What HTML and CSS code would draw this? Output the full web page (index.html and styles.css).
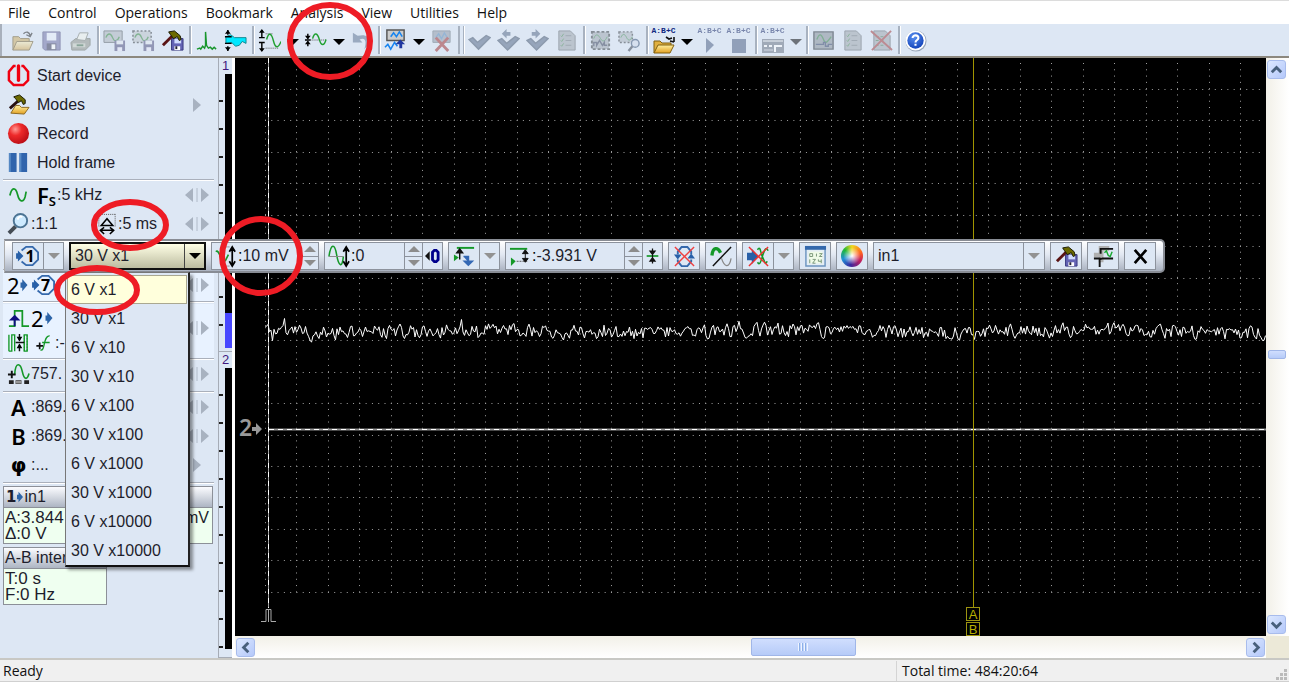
FILE: index.html
```html
<!DOCTYPE html>
<html lang="en">
<head>
<meta charset="utf-8">
<title>Oscilloscope</title>
<link rel="stylesheet" href="styles.css">
</head>
<body>
<svg class="sprites" aria-hidden="true">
  <defs>
    <linearGradient id="gold" x1="0" y1="0" x2="0" y2="1"><stop offset="0" stop-color="#fff0a0"/><stop offset="1" stop-color="#e2a020"/></linearGradient>
    <radialGradient id="ball" cx=".35" cy=".3" r=".75"><stop offset="0" stop-color="#ff9a94"/><stop offset=".4" stop-color="#ee2a2a"/><stop offset="1" stop-color="#b80c14"/></radialGradient>
    <radialGradient id="helpball" cx=".4" cy=".3" r=".8"><stop offset="0" stop-color="#5a90f0"/><stop offset="1" stop-color="#0c3cb4"/></radialGradient>
    <symbol id="folder" viewBox="0 0 24 24">
      <path d="M2 22V8h6l2 2h9v4" fill="#d8a838" stroke="#6e5410"/>
      <path d="M2 22l4-9h17l-4 9z" fill="url(#gold)" stroke="#6e5410"/>
      <path d="M13 5c3-3 6-2 7 2m2-3l-2 4-4-2" fill="none" stroke="#222" stroke-width="1.4"/>
    </symbol>
    <symbol id="folder-wide" viewBox="0 0 24 19">
      <path d="M2 18V6h6l2 2h9v3" fill="#e0b040" stroke="#806010"/>
      <path d="M2 18l4-8h16l-4 8z" fill="url(#gold)" stroke="#806010"/>
      <path d="M14 2l3 2 3-1m2 4V2m-4 4l4 1" fill="none" stroke="#111" stroke-width="1.6"/>
    </symbol>
    <symbol id="disk" viewBox="0 0 24 24">
      <path d="M3 3h18v19H5l-2-2z" fill="#6868b8" stroke="#45458c"/>
      <path d="M7 4h10v8H7z" fill="#e8f0ff"/><path d="M7 15h10v7H7z" fill="#30305c"/><path d="M12 16h4v5h-4z" fill="#fff"/>
    </symbol>
    <symbol id="printer" viewBox="0 0 24 24">
      <path d="M2 14l5-4h15v7l-5 5H3z" fill="#8a9080" stroke="#606858"/>
      <path d="M8 11l3-7h9l-3 8z" fill="#f2f6e8" stroke="#707868"/><path d="M4 15h13v4H4z" fill="#c4ccb4"/><path d="M8 17h7" stroke="#286838" stroke-width="2"/>
    </symbol>
    <symbol id="screen-save" viewBox="0 0 24 24">
      <path d="M1 2h19v12H1z" fill="#a8b4bc" stroke="#48545c"/><path d="M3 9c2-5 5-5 7 0s5 4 7-1" fill="none" stroke="#108c20" stroke-width="1.4"/>
      <path d="M12 12h11v11H12z" fill="#48488c"/><path d="M14 12h7v4h-7z" fill="#e0e8f4"/><path d="M15 19h5v4h-5z" fill="#e8e8ff"/>
    </symbol>
    <symbol id="region-save" viewBox="0 0 24 24">
      <path d="M1 2h19v12H1z" fill="#b8c2ca" stroke="#303840" stroke-width="1.6" stroke-dasharray="2 2"/><path d="M3 9c2-5 5-5 7 0s5 4 7-1" fill="none" stroke="#108c20" stroke-width="1.4"/>
      <path d="M12 12h11v11H12z" fill="#48488c"/><path d="M14 12h7v4h-7z" fill="#e0e8f4"/><path d="M15 19h5v4h-5z" fill="#e8e8ff"/>
    </symbol>
    <symbol id="hammer-save" viewBox="0 0 24 24">
      <path d="M11 10h12v12H11z" fill="#6464b4" stroke="#383880"/><path d="M14 10h7v5h-7z" fill="#d0dcff"/><path d="M14 18h6v4h-6z" fill="#fff"/><path d="M15 18h2v3h-2z" fill="#223"/>
      <path d="M2 17L13 6" stroke="#5a1414" stroke-width="3"/><path d="M8 3l6-1 6 5 1 4-2 1-2-4-4 2-3-4z" fill="#6c6a00" stroke="#181800"/>
    </symbol>
    <symbol id="modes" viewBox="0 0 24 24">
      <path d="M4 21l5-8h4l2 2h8l-5 7z" fill="url(#gold)" stroke="#8c6820"/>
      <path d="M3 16L13 7" stroke="#281010" stroke-width="3"/><path d="M7 4l6-2 6 5v4l-2 1-2-4-3 2-3-4z" fill="#6c6a00" stroke="#181800"/>
    </symbol>
    <symbol id="spectrum" viewBox="0 0 24 24"><path d="M2 21l3-1 1 1 2-3 2 2 1-3V3l1 14 2 3 2-1 2 2 2-2 2 2" fill="none" stroke="#18962c" stroke-width="1.5"/></symbol>
    <symbol id="envelope" viewBox="0 0 24 24">
      <path d="M2 8l5-2 4 3h12v6l-4-2-3 4-4 1-4-4-6 1z" fill="#00e8ff" stroke="#108890"/>
      <path d="M4 1v5M4 23v-5M1 8h7M1 15h7" stroke="#000" stroke-width="1.5"/><path d="M1 5l3-4 3 4zM1 19l3 4 3-4z"/>
    </symbol>
    <symbol id="sine-fit" viewBox="0 0 24 24">
      <path d="M4 1v8M4 14v9M1 9h6M1 14h6" stroke="#000" stroke-width="1.500"/><path d="M1 4l3-4 3 4zM1 20l3 4 3-4z"/>
      <path d="M8 5h7M8 20h14" stroke="#555" stroke-dasharray="1 1"/><path d="M9 11c2-8 5-7 7 1s5 9 8 1" fill="none" stroke="#20a030" stroke-width="1.500"/>
    </symbol>
    <symbol id="sine-center" viewBox="0 0 24 24">
      <path d="M4 5v5M4 13v5M1 11.500h6" stroke="#000" stroke-width="1.500"/><path d="M1 7l3 4 3-4zM1 16l3-4 3 4z"/><path d="M8 11.500h15" stroke="#555" stroke-dasharray="1 1"/>
      <path d="M9 10c2-7 5-6 7 1s5 7 7 0" fill="none" stroke="#20a030" stroke-width="1.500"/>
    </symbol>
    <symbol id="undo" viewBox="0 0 24 24"><path d="M3 4v10h10l-3-3c5-2 8 0 5 10 8-8 6-17-7-14z" fill="#50709c"/></symbol>
    <symbol id="wave-add" viewBox="0 0 24 24">
      <path d="M3 1h18v11H3z" fill="#ccc" stroke="#555" stroke-width="1.500"/><path d="M7 8l3-4 3 4 3-5 3 5M1 19l3-3 3 5 4-7 3 4" fill="none" stroke="#1684f0" stroke-width="1.600"/><path d="M17 11l5 5h-3v4h-3v-4h-4z" fill="#2038a0"/>
    </symbol>
    <symbol id="wave-del" viewBox="0 0 24 24">
      <path d="M3 2h18v12H3z" fill="#8898ac" stroke="#607080"/><path d="M6 9l3-4 3 5 3-6 3 5" fill="none" stroke="#3c88d0" stroke-width="1.4"/><path d="M6 9l13 14M19 9L6 23" stroke="#c42020" stroke-width="3"/>
    </symbol>
    <symbol id="check" viewBox="0 0 24 24"><path d="M1 11l4-2 5 5 9-7 4 2-12 12z" fill="#4a6690" stroke="#365074" stroke-width="1.500"/></symbol>
    <symbol id="check-prev" viewBox="0 0 24 24"><path d="M1 12l4-2 5 5 9-7 4 2-12 12z" fill="#4a6690" stroke="#365074" stroke-width="1.500"/><path d="M5 5l5-5v3h4v4h-4v3z" fill="#4a6690"/></symbol>
    <symbol id="check-next" viewBox="0 0 24 24"><path d="M1 12l4-2 5 5 9-7 4 2-12 12z" fill="#4a6690" stroke="#365074" stroke-width="1.500"/><path d="M15 5l-5-5v3H6v4h4v3z" fill="#4a6690"/></symbol>
    <symbol id="sheet" viewBox="0 0 24 24">
      <path d="M4 2h12l5 5v15H4z" fill="#98a2ac" stroke="#58626c"/><path d="M6 7l1 1 2-3M6 12l1 1 2-3M6 17l1 1 2-3" fill="none" stroke="#248c34"/><path d="M11 7h6M11 12h6M11 17h6" stroke="#607078"/>
    </symbol>
    <symbol id="sheet-del" viewBox="0 0 24 24">
      <path d="M4 2h12l5 5v15H4z" fill="#98a2ac" stroke="#58626c"/><path d="M6 8h10M6 12h10M6 17h10" stroke="#287838" stroke-dasharray="3 2"/><path d="M1 2l22 20M22 2L2 22" stroke="#c02828" stroke-width="2"/>
    </symbol>
    <symbol id="chart-frame" viewBox="0 0 24 24">
      <path d="M3 3h18v18H3z" fill="#98a4b0" stroke="#303840" stroke-width="2" stroke-dasharray="3 2"/><path d="M5 10c2-6 5-4 7 0s5 3 7-2" fill="none" stroke="#188c34"/><path d="M5 18v-4h3v3l3-5 3 5 2-3v3h3" fill="none" stroke="#303c60" stroke-width="1.5"/>
    </symbol>
    <symbol id="chart-zoom" viewBox="0 0 24 24">
      <path d="M1 3h14v11H1z" fill="#a8b4c0" stroke="#303840" stroke-width="1.5" stroke-dasharray="2 2"/><path d="M3 9c2-5 4-4 6 0s4 3 6-1" fill="none" stroke="#188c34"/><circle cx="18" cy="15" r="4" fill="#ccdcf4" stroke="#284c80" stroke-width="1.5"/><path d="M15 18l-4 5" stroke="#303c50" stroke-width="2.500"/>
    </symbol>
    <symbol id="play" viewBox="0 0 24 19"><path d="M8 3l8 7-8 8z" fill="#405c90"/></symbol>
    <symbol id="stop" viewBox="0 0 24 19"><path d="M5 4h14v14H5z" fill="#405c90"/></symbol>
    <symbol id="panel" viewBox="0 0 24 19"><path d="M1 4h22v14H1z" fill="#607084"/><path d="M2 6h20" stroke="#fff"/><path d="M3 11h3m2 0h3m3 6v-6h7" stroke="#fff" stroke-width="2" fill="none"/><path d="M3 15h9" stroke="#ccd"/></symbol>
    <symbol id="scope" viewBox="0 0 24 24"><path d="M2 3h20v18H2z" fill="#7c8c98" stroke="#202c38" stroke-width="1.5"/><path d="M5 11c3-8 5-5 7 0s4 3 8-3" fill="none" stroke="#108028" stroke-width="1.4"/><path d="M4 16h8v-2h2v4h3v-2h4" fill="none" stroke="#203870" stroke-width="1.4"/></symbol>
    <symbol id="help" viewBox="0 0 24 24"><circle cx="12.500" cy="12.500" r="11" fill="#687890" opacity=".6"/><circle cx="12" cy="12" r="10.500" fill="#fff"/><circle cx="12" cy="12" r="8.500" fill="url(#helpball)"/><path d="M9 9.500C9 5.500 15.500 6 15 9.500c0 2-3 2-3 4.500m0 1.500v2" fill="none" stroke="#fff" stroke-width="2.200"/></symbol>
    <symbol id="power" viewBox="0 0 24 24"><path d="M9 2H7L2 8v9l5 5h10l5-5V8l-5-6h-2" fill="none" stroke="#f00010" stroke-width="2.600"/><path d="M12 2v15" stroke="#f00010" stroke-width="3.500" stroke-linecap="round"/></symbol>
    <symbol id="record" viewBox="0 0 24 24"><circle cx="12" cy="12" r="11" fill="url(#ball)"/></symbol>
    <symbol id="pause" viewBox="0 0 24 24"><path d="M2 2h8v20H2zM13 2h8v20h-8z" fill="#3064ac"/><path d="M2 2h2v20H2zM13 2h2v20h-2z" fill="#5488c4"/></symbol>
    <symbol id="sine" viewBox="0 0 24 24"><path d="M3 13c2-9 6-9 8-1s6 9 8 2l1-5" fill="none" stroke="#149828" stroke-width="1.800"/></symbol>
    <symbol id="magnifier" viewBox="0 0 24 24"><path d="M9 15l-7 7" stroke="#444c54" stroke-width="4"/><circle cx="14" cy="9" r="7" fill="#cdeaff" stroke="#4c7494" stroke-width="2"/><path d="M11 8c1-3 3-4 5-3" stroke="#fff" stroke-width="2" fill="none"/></symbol>
    <symbol id="width" viewBox="0 0 20 24"><path d="M1.500 2v13M18.500 2v13M1 2.500h17" fill="none" stroke="#555" stroke-dasharray="1 1"/><path d="M4 14l6-7 6 7zM3 19h14M7 16l-4 3 4 4M13 16l4 3-4 4" fill="none" stroke="#000" stroke-width="1.600"/></symbol>
    <symbol id="blue-dot-arrow" viewBox="0 0 8 16"><path d="M0 5h2V1l6 7-6 7v-4H0z" fill="#2c64a8"/></symbol>
    <symbol id="circle" viewBox="0 0 26 24"><path d="M0 9h2V6l6 6-6 6v-3H0z" fill="#2860a8"/><path d="M6 6l5-4h7l6 6v8l-6 6h-7l-5-4" fill="none" stroke="#3468ac" stroke-width="2"/></symbol>
    <symbol id="rise" viewBox="0 0 24 24"><path d="M2 20h6V4h8v16h7" fill="none" stroke="#149828" stroke-width="1.800"/><path d="M8 8l6 6H2z" fill="#101080"/><path d="M8 12v8" stroke="#101080" stroke-width="2"/></symbol>
    <symbol id="gate" viewBox="0 0 24 24"><path d="M2 21h3V4h3v17M2 4v17M18 4h3v17h-3z" fill="none" stroke="#149828" stroke-width="1.400"/><path d="M18 4v17M21 4v17" stroke="#149828" stroke-dasharray="2 1"/><path d="M9 12h9M13 3v7M13 14v7" stroke="#111" stroke-width="1.500"/><path d="M10 6h6l-3 5zM10 18h6l-3-5z"/></symbol>
    <symbol id="slope" viewBox="0 0 24 24"><path d="M9 21c6 2 3-18 11-17M11 12h9" fill="none" stroke="#149828" stroke-width="1.600"/><path d="M4 16h8M8 12v8" stroke="#111" stroke-width="2"/></symbol>
    <symbol id="delay" viewBox="0 0 24 24"><path d="M8 13c1-14 6-12 8-3s5 9 7 2" fill="none" stroke="#149828" stroke-width="1.700"/><path d="M5 9v8M1 13h8" stroke="#111" stroke-width="2"/><path d="M2 21h5M9 21h6M18 21h5" stroke="#222" stroke-width="4"/><path d="M9 21h6" stroke="#999" stroke-width="3"/></symbol>
    <symbol id="gain" viewBox="0 0 24 24"><path d="M1 7c3-4 6 13 10 9l3-6" fill="none" stroke="#149828" stroke-width="1.700"/><path d="M8 2h8M8 22h8" stroke="#555" stroke-dasharray="1 1"/><path d="M18 3v18M15 7l3-5 3 5M15 17l3 5 3-5" fill="none" stroke="#000" stroke-width="1.800"/></symbol>
    <symbol id="offset" viewBox="0 0 24 24"><path d="M1 12C3-2 7-2 9 10s6 15 7 2" fill="none" stroke="#149828" stroke-width="1.600"/><path d="M1 12h15" stroke="#888"/><path d="M19 3v18M16 7l3-5 3 5M16 17l3 5 3-5" fill="none" stroke="#000" stroke-width="1.800"/></symbol>
    <symbol id="zero" viewBox="0 0 16 20"><path d="M5 5v10L0 10z" fill="#111"/><path d="M8 6l2-2h2l2 2v8l-2 2h-2l-2-2z" fill="none" stroke="#00008c" stroke-width="3"/></symbol>
    <symbol id="trigger" viewBox="0 0 24 24"><path d="M4 3h18" stroke="#149828" stroke-width="2"/><path d="M1 10l5 3-5 4z" fill="#149828"/><path d="M7 5v10M4 8l3-4 3 4z" stroke="#111" fill="#111" stroke-width="1.500"/><path d="M11 12h5v6M12 17h8l-4 4z" stroke="#3468b4" stroke-width="1.800" fill="#3468b4"/></symbol>
    <symbol id="level" viewBox="0 0 24 24"><path d="M1 4h18" stroke="#149828" stroke-width="2"/><path d="M2 13l5 4-5 5z" fill="#149828"/><path d="M8 17h12" stroke="#555" stroke-dasharray="2 1"/><path d="M17 6v10M14 9l3-4 3 4zM14 14l3 4 3-4z" fill="#111" stroke="#111"/></symbol>
    <symbol id="center" viewBox="0 0 16 24"><path d="M1 12h14" stroke="#149828" stroke-width="2"/><path d="M8 3v18M5 6h6l-3 4zM5 18h6l-3-4z" fill="#111" stroke="#111" stroke-width="1.500"/></symbol>
    <symbol id="loop-off" viewBox="0 0 24 24"><path d="M5 10V7l4-5h6l4 5v3M5 15v2l4 5h6l4-5v-2" fill="none" stroke="#3468ac" stroke-width="2"/><path d="M1 10h8l-4 5zM15 14h8l-4-5z" fill="#2860a8"/><path d="M2 2l20 20M22 2L2 22" stroke="#f04040" stroke-width="1.500"/></symbol>
    <symbol id="invert" viewBox="0 0 24 24"><path d="M2 11c1-9 6-9 9-3" fill="none" stroke="#149828" stroke-width="3.500"/><path d="M12 14c3 9 8 11 10 0" fill="none" stroke="#888" stroke-width="1.300"/><path d="M3 22L22 2" stroke="#111" stroke-width="1.500"/></symbol>
    <symbol id="filter-off" viewBox="0 0 24 24"><path d="M0 8h5V4l7 8-7 8v-4H0z" fill="#2860a8"/><path d="M11 5c3-5 3 3 5 7s3 10 5 5M11 18c3 5 4-4 6-9s3-7 5-3" fill="none" stroke="#149828" stroke-width="1.600"/><path d="M2 2l20 20M22 2L2 22" stroke="#f03030" stroke-width="1.500"/></symbol>
    <symbol id="readout" viewBox="0 0 24 24"><path d="M2 2h20v20H2z" fill="#e4eef4" stroke="#6c94c0" stroke-width="1.500"/><path d="M1 3h22" stroke="#3468ac" stroke-width="4"/><path d="M5 7h14v12H5z" fill="#effbe8"/><path d="M6 9h3v3H6zM13 9v3M16 9h3l-3 3h3M6 15v4M9 15h3l-3 4h3M15 15v2h3m0-2v4" fill="none" stroke="#779478"/></symbol>
    <symbol id="hook" viewBox="0 0 24 24"><path d="M7 1h11v5H12v12H7v-5H2V8h5z" fill="#b0b0b0"/><path d="M9 9V4h13M2 14h7M8 23v-8l3-1h11" fill="none" stroke="#111" stroke-width="2"/><path d="M13 8l2-2 2 5 2 1 2-5" fill="none" stroke="#18a830" stroke-width="1.500"/></symbol>
    <symbol id="close" viewBox="0 0 24 24"><path d="M6 5l12 14M18 5L6 19" stroke="#000" stroke-width="2.800"/></symbol>
    <symbol id="nudge" viewBox="0 0 24 14"><path d="M8 0v14L0 7zM16 0v14l8-7z" fill="#a8b2c0"/><path d="M12 0v14" stroke="#b0bac8"/></symbol>
    <symbol id="next" viewBox="0 0 24 14"><path d="M8 0v14l8-7z" fill="#a8b2c0"/></symbol>
  </defs>
</svg>

<nav class="menu">
  <button>File</button><button>Control</button><button>Operations</button><button>Bookmark</button><button>Analysis</button><button>View</button><button>Utilities</button><button>Help</button>
</nav>

<div class="toolbar" role="toolbar" aria-label="Main">
  <button class="tool off" aria-label="Open"><svg><use href="#folder"/></svg></button>
  <button class="tool off" aria-label="Save"><svg><use href="#disk"/></svg></button>
  <button class="tool off" aria-label="Print"><svg><use href="#printer"/></svg></button>
  <i class="sep"></i>
  <button class="tool off" aria-label="Save screen"><svg><use href="#screen-save"/></svg></button>
  <button class="tool off" aria-label="Save region"><svg><use href="#region-save"/></svg></button>
  <button class="tool" aria-label="Save settings"><svg><use href="#hammer-save"/></svg></button>
  <i class="sep"></i>
  <button class="tool" aria-label="Spectrum"><svg><use href="#spectrum"/></svg></button>
  <button class="tool" aria-label="Envelope"><svg><use href="#envelope"/></svg></button>
  <i class="sep"></i>
  <button class="tool" aria-label="Fit"><svg><use href="#sine-fit"/></svg></button>
  <button class="drop" aria-label="Fit options"></button>
  <button class="tool" aria-label="Center"><svg><use href="#sine-center"/></svg></button>
  <button class="drop" aria-label="Center options"></button>
  <button class="tool off" aria-label="Undo"><svg><use href="#undo"/></svg></button>
  <i class="sep"></i>
  <button class="tool" aria-label="Add wave"><svg><use href="#wave-add"/></svg></button>
  <button class="drop" aria-label="Wave options"></button>
  <button class="tool off" aria-label="Remove wave"><svg><use href="#wave-del"/></svg></button>
  <i class="sep wide"></i>
  <button class="tool off" aria-label="Apply"><svg><use href="#check"/></svg></button>
  <button class="tool off" aria-label="Previous"><svg><use href="#check-prev"/></svg></button>
  <button class="tool off" aria-label="Next"><svg><use href="#check-next"/></svg></button>
  <button class="tool off" aria-label="List"><svg><use href="#sheet"/></svg></button>
  <i class="sep"></i>
  <button class="tool off" aria-label="Chart"><svg><use href="#chart-frame"/></svg></button>
  <button class="tool off" aria-label="Zoom chart"><svg><use href="#chart-zoom"/></svg></button>
  <i class="sep"></i>
  <button class="tool formula"><span>A:B+C</span><svg><use href="#folder-wide"/></svg></button>
  <button class="drop" aria-label="Script options"></button>
  <button class="tool formula off"><span>A:B+C</span><svg><use href="#play"/></svg></button>
  <button class="tool formula off"><span>A:B+C</span><svg><use href="#stop"/></svg></button>
  <i class="sep"></i>
  <button class="tool formula off"><span>A:B+C</span><svg><use href="#panel"/></svg></button>
  <button class="drop off" aria-label="Panel options"></button>
  <i class="sep"></i>
  <button class="tool off" aria-label="Scope"><svg><use href="#scope"/></svg></button>
  <button class="tool off" aria-label="Report"><svg><use href="#sheet"/></svg></button>
  <button class="tool off" aria-label="Clear report"><svg><use href="#sheet-del"/></svg></button>
  <i class="sep"></i>
  <button class="tool" aria-label="About"><svg><use href="#help"/></svg></button>
</div>

<main class="work">
  <aside class="side">
    <section class="group commands">
      <button class="row"><svg class="ico"><use href="#power"/></svg><span>Start device</span></button>
      <button class="row"><svg class="ico"><use href="#modes"/></svg><span>Modes</span><svg class="nudge"><use href="#next"/></svg></button>
      <button class="row"><svg class="ico"><use href="#record"/></svg><span>Record</span></button>
      <button class="row"><svg class="ico"><use href="#pause"/></svg><span>Hold frame</span></button>
    </section>
    <section class="group scale">
      <div class="row"><svg class="ico"><use href="#sine"/></svg><b class="big">F<sub>S</sub></b><span>:5 kHz</span><svg class="nudge"><use href="#nudge"/></svg></div>
      <div class="row tight"><svg class="ico"><use href="#magnifier"/></svg><span class="zoom">:1:1</span><svg class="ico slim"><use href="#width"/></svg><span>:5 ms</span><svg class="nudge"><use href="#nudge"/></svg></div>
    </section>
    <section class="group channel">
      <div class="row"><span class="big">2</span><svg class="pin"><use href="#blue-dot-arrow"/></svg><span class="chan"><svg><use href="#circle"/></svg><b>7</b></span><svg class="nudge"><use href="#nudge"/></svg></div>
    </section>
    <section class="group sync">
      <div class="row short"><svg class="ico"><use href="#rise"/></svg><span class="big">2</span><svg class="pin"><use href="#blue-dot-arrow"/></svg></div>
      <div class="row short"><svg class="ico"><use href="#gate"/></svg><svg class="ico slope"><use href="#slope"/></svg><span>:-2</span></div>
      <svg class="nudge mid"><use href="#nudge"/></svg>
    </section>
    <section class="group delay">
      <div class="row tight"><svg class="ico"><use href="#delay"/></svg><span>757.</span><svg class="nudge"><use href="#nudge"/></svg></div>
    </section>
    <section class="group cursors">
      <div class="row tight"><b class="key">A</b><span>:869.</span><svg class="nudge"><use href="#nudge"/></svg></div>
      <div class="row tight"><b class="key">B</b><span>:869.</span><svg class="nudge"><use href="#nudge"/></svg></div>
      <div class="row tight"><b class="key phi">φ</b><span>:...</span><svg class="nudge"><use href="#next"/></svg></div>
    </section>
    <section class="card">
      <h2><b>1</b><svg class="pin small"><use href="#blue-dot-arrow"/></svg>in1</h2>
      <div><p>A:3.844</p><p>Δ:0 V</p><span class="unit">mV</span></div>
    </section>
    <section class="card half">
      <h2>A-B inter</h2>
      <div><p>T:0 s</p><p>F:0 Hz</p></div>
    </section>
  </aside>

  <div class="rulers">
    <div class="ruler"><span>1</span><i class="meter"><i class="fill"></i></i></div>
    <div class="ruler second"><span>2</span><i class="meter"></i></div>
  </div>

  <div class="view">
    <div class="plot">
      <svg class="scene" role="img" aria-label="Waveform">
        <g id="grid"></g>
        <path d="M34 371.500H2000" stroke="#909090" stroke-width="2"/>
        <path d="M34 371.500H2000" stroke="#fff" stroke-dasharray="5 4"/>
        <path d="M33.500 0V550" stroke="#a0a0a0"/>
        <path d="M33.500 0V550" stroke="#fff" stroke-dasharray="5 4"/>
        <path d="M26 563.500h5v-12h5v12h5M33.500 552v12" fill="none" stroke="#aaa"/>
        <path id="wave" fill="none" stroke="#fff"/>
        <path d="M738.500 0V550" stroke="#a09400"/>
        <g class="zero"><text x="4" y="378">2</text><path d="M17 369h4v-4l6 6-6 6v-4h-4z"/></g>
        <g class="mark"><rect x="731.500" y="549.500" width="13" height="13"/><rect x="731.500" y="564.500" width="13" height="13"/><text x="738" y="561">A</text><text x="738" y="576">B</text></g>
      </svg>
    </div>
    <div class="vbar"><button class="step" aria-label="Up"><svg viewBox="0 0 18 18"><path d="M4 12l5-5 5 5"/></svg></button><i class="thumb"></i><button class="step" aria-label="Down"><svg viewBox="0 0 18 18"><path d="M4 7l5 5 5-5"/></svg></button></div>
    <div class="hbar"><button class="step" aria-label="Left"><svg viewBox="0 0 18 18"><path d="M12 4L7 9l5 5"/></svg></button><i class="thumb"></i><button class="step" aria-label="Right"><svg viewBox="0 0 18 18"><path d="M7 4l5 5-5 5"/></svg></button></div>
  </div>
</main>

<footer class="status"><span class="state">Ready</span><span class="total">Total time: 484:20:64</span><svg class="grip" viewBox="0 0 14 14"><path d="M9 1h3v3H9zM9 5h3v3H9zM5 5h3v3H5zM1 9h3v3H1zM5 9h3v3H5zM9 9h3v3H9z"/></svg></footer>

<div class="float" role="toolbar" aria-label="Channel">
  <div class="box split"><button class="pick" aria-label="Channel 1"><span class="chan"><svg><use href="#circle"/></svg><b>1</b></span></button><button class="drop gray" aria-label="Channels"></button></div>
  <div class="box range"><select aria-label="Range"><option>30 V x1</option></select><i class="drop"></i></div>
  <div class="box spin gain"><svg class="ico"><use href="#gain"/></svg><label for="gain">:</label><input id="gain" value="10 mV"><span class="steps"><button aria-label="More"></button><button aria-label="Less"></button></span></div>
  <div class="box spin shift"><svg class="ico"><use href="#offset"/></svg><label for="shift">:</label><input id="shift" value="0"><span class="steps"><button aria-label="More"></button><button aria-label="Less"></button></span><button class="extra" aria-label="Zero"><svg class="zeroico"><use href="#zero"/></svg></button></div>
  <div class="box split"><button class="pick" aria-label="Trigger"><svg class="ico"><use href="#trigger"/></svg></button><button class="drop gray" aria-label="Trigger modes"></button></div>
  <div class="box spin level"><svg class="ico"><use href="#level"/></svg><label for="level">:</label><input id="level" value="-3.931 V"><span class="steps"><button aria-label="More"></button><button aria-label="Less"></button></span><button class="extra" aria-label="Middle"><svg class="zeroico"><use href="#center"/></svg></button></div>
  <button class="box one" aria-label="Coupling"><svg class="ico"><use href="#loop-off"/></svg></button>
  <button class="box one" aria-label="Invert"><svg class="ico"><use href="#invert"/></svg></button>
  <div class="box split"><button class="pick" aria-label="Filter"><svg class="ico"><use href="#filter-off"/></svg></button><button class="drop gray" aria-label="Filters"></button></div>
  <button class="box one" aria-label="Readout"><svg class="ico"><use href="#readout"/></svg></button>
  <button class="box one" aria-label="Color"><i class="wheel"></i></button>
  <div class="box name"><select aria-label="Input name"><option>in1</option></select><i class="drop gray"></i></div>
  <button class="box one" aria-label="Store"><svg class="ico"><use href="#hammer-save"/></svg></button>
  <button class="box one" aria-label="Dock"><svg class="ico"><use href="#hook"/></svg></button>
  <button class="box one" aria-label="Close"><svg class="ico"><use href="#close"/></svg></button>
</div>

<ul class="list" role="listbox" aria-label="Ranges">
  <li role="option" aria-selected="true" class="hot">6 V x1</li><li role="option">30 V x1</li><li role="option">6 V x10</li><li role="option">30 V x10</li><li role="option">6 V x100</li><li role="option">30 V x100</li><li role="option">6 V x1000</li><li role="option">30 V x1000</li><li role="option">6 V x10000</li><li role="option">30 V x10000</li>
</ul>

<svg class="rings" aria-hidden="true">
  <ellipse cx="330" cy="41" rx="40" ry="36"/><ellipse cx="130" cy="225" rx="36" ry="23"/><ellipse cx="261" cy="256" rx="39" ry="37"/><ellipse cx="97" cy="290" rx="40" ry="22"/>
</svg>
<script src="plot.js"></script>
</body>
</html>
```
FILE: styles.css
```css
* { box-sizing: border-box; }
html, body { height: 100%; }
body {
  margin: 0; display: flex; flex-direction: column; position: relative; overflow: hidden;
  background: #dde7f4; color: #1e1e2c;
  font: 16px/29px "Liberation Sans", Arial, sans-serif;
}
button, input, select { font: inherit; color: inherit; border: 0; padding: 0; margin: 0; background: none; border-radius: 0; }
svg { display: block; flex: none; }
h2, p, ul { margin: 0; padding: 0; }
.sprites { position: absolute; width: 0; height: 0; }

.menu { display: flex; gap: 18px; height: 24px; padding: 0 8px; background: #fff; border-top: 1px solid #dcdcdc; font: 14px/23px "Open Sans", sans-serif; color: #111; flex: none; }

.toolbar { display: flex; align-items: center; height: 34px; padding-left: 8px; border-bottom: 2px solid #8c887e; background: #dde7f4; box-shadow: inset 2px 0 #a8b0bc; flex: none; }
.tool { width: 29px; height: 28px; display: flex; flex-direction: column; align-items: center; justify-content: center; flex: none; }
.tool svg { width: 23px; height: 23px; }
.tool.off, .drop.off { opacity: .5; filter: saturate(.7); }
.formula span { font: bold 8px/8px "Liberation Mono", monospace; color: #102880; }
.formula svg { width: 24px; height: 19px; }
.sep { width: 5px; height: 28px; border-right: 1px solid #fff; flex: none; background: linear-gradient(90deg, transparent 2px, #a8b2c0 2px); }
.sep.wide { width: 9px; background: linear-gradient(90deg, transparent 2px, #a8b2c0 2px 4px, transparent 4px 7px, #a8b2c0 7px); }
.drop { width: 17px; display: flex; align-items: center; justify-content: center; flex: none; }
.drop::before { content: ""; border: 6px solid transparent; border-top-color: #000; border-bottom: 0; margin-top: 4px; }
.drop.gray::before { border-top-color: #929292; margin: 0; }

.work { flex: 1; display: flex; min-height: 0; }
.side { width: 218px; padding: 3px 4px 0 3px; flex: none; display: flex; flex-direction: column; }
.group { border-bottom: 1px solid #aab0bb; box-shadow: 0 1px #fff; position: relative; flex: none; }
.row { display: flex; align-items: center; width: 100%; height: 29px; padding-left: 4px; gap: 7px; text-align: left; white-space: nowrap; position: relative; }
.row.tight { gap: 1px; }
.row.short { height: 24px; gap: 1px; }
.ico { width: 23px; height: 23px; }
.ico.slim { width: 20px; }
.ico.slope { margin: 0 1px 0 2px; width: 20px; }
.row .nudge { margin-left: auto; margin-right: 5px; }
.nudge { width: 24px; height: 14px; }
.nudge.mid { position: absolute; right: 5px; top: 17px; }
.commands { height: 119px; }
.scale { height: 90px; }
.zoom { width: 65px; }
.big { font: 22px/28px "Noto Sans", sans-serif; color: #000; }
.big sub { font-size: 13px; line-height: 0; vertical-align: -2px; }
b.big { font-weight: 600; }
b.big + span { margin-left: -6px; }
.pin { width: 8px; height: 14px; }
.pin.small { height: 12px; }
.channel { height: 32px; background: #e8f2ff; }
.channel .row { gap: 0; }
.chan { position: relative; display: block; width: 24px; height: 22px; margin-left: 4px; }
.chan svg { width: 24px; height: 22px; }
.chan b { position: absolute; inset: 0 0 0 4px; text-align: center; color: #000; font: bold 16px/22px "Noto Sans", sans-serif; }
.sync { margin-top: 2px; padding-top: 2px; height: 55px; background: #e8f2ff; }
.delay { height: 33px; }
.cursors { height: 91px; }
.key { width: 23px; text-align: center; font: 600 22px/28px "Noto Sans", sans-serif; color: #000; }
.key.phi { font: bold 20px/28px "DejaVu Sans", sans-serif; }
.card { width: 210px; margin-top: 3px; border: 1px solid #8c9098; background: #effff0; flex: none; font: 17px/17px "Liberation Sans", sans-serif; }
.card h2 { display: flex; align-items: center; height: 20px; padding-left: 2px; font: 16px/20px "Liberation Sans", sans-serif; background: linear-gradient(#fbfcff, #adb5c3); white-space: nowrap; }
.card h2 b { font-family: "DejaVu Sans", sans-serif; font-size: 15px; }
.card div { border-top: 1px solid #8c9098; padding: 2px 1px 0; height: 36px; position: relative; line-height: 16px; }
.card p { line-height: 16px; }
.unit { position: absolute; right: 3px; top: 2px; font-size: 16px; }
.card.half { width: 104px; overflow: hidden; }
.card.half h2 { padding-left: 1px; }

.rulers { width: 17px; flex: none; display: flex; flex-direction: column; border-left: 1px solid #a6acb6; border-right: 3px solid #fff; background: #dde7f4; }
.ruler { flex: 296; display: flex; flex-direction: column; border-bottom: 1px solid #a6acb6; padding-bottom: 3px; background: repeating-linear-gradient(transparent 0 26px, #222 26px 28px) no-repeat 0 16px / 4px 92%; }
.ruler.second { flex: 304; padding-bottom: 8px; }
.ruler span { align-self: center; font: 13px/16px "Liberation Sans", sans-serif; color: #401880; }
.ruler .meter { flex: 1; width: 7px; margin-left: auto; background: #000; display: flex; align-items: flex-end; }
.fill { width: 100%; height: 35px; background: #4848ff; }

.view { flex: 1; min-width: 0; display: grid; grid-template: minmax(0, 1fr) 22px / minmax(0, 1fr) 23px; background: #ece9d8; }
.plot { background: #000; position: relative; overflow: hidden; }
.scene { position: absolute; width: 100%; height: 100%; left: 0; top: 0; }
.zero { fill: #999; font: 600 23px "Noto Sans", sans-serif; }
.mark rect { fill: none; stroke: #9c9410; }
.mark text { fill: #b8b000; font: 13px "Liberation Sans", sans-serif; text-anchor: middle; }
.vbar, .hbar { display: flex; padding: 2px; }
.vbar { flex-direction: column; align-items: center; background: linear-gradient(90deg, #f2f0e8, #fff); padding-right: 4px; }
.hbar { align-items: center; background: linear-gradient(#f2f0e8, #fff); padding: 1px; }
.step { width: 19px; height: 19px; border: 1px solid #a8bcec; border-radius: 3px; background: linear-gradient(135deg, #dce8ff, #b4c8fa); flex: none; }
.step svg { width: 17px; height: 17px; }
.step path { fill: none; stroke: #48607c; stroke-width: 3; }
.thumb { background: linear-gradient(#d0defe, #b6cbf8); border: 1px solid #a0b6e8; border-radius: 2px; }
.vbar .thumb { width: 18px; height: 9px; margin: 271px auto auto; }
.hbar .thumb { width: 105px; height: 18px; margin: 0 390px 0 auto; position: relative; }
.hbar .thumb::after { content: ""; position: absolute; left: 46px; top: 4px; width: 10px; height: 8px; background: repeating-linear-gradient(90deg, #eef4ff 0 1px, #8cb0e8 1px 2px, transparent 2px 3px); }

.status { height: 24px; display: flex; align-items: center; background: #f0f0f0; border-top: 2px solid #c8c8c4; border-bottom: 1px solid #d0d0d0; padding-left: 3px; font: 14px/20px "Open Sans", sans-serif; color: #111; flex: none; }
.state { flex: 1; }
.total { width: 393px; flex: none; border-left: 1px solid #d4d4d4; padding-left: 5px; }
.grip { width: 14px; height: 14px; position: absolute; right: 0; bottom: 0; fill: #bbb; }

.float { position: absolute; left: 4px; top: 239px; height: 34px; display: flex; gap: 5px; align-items: center; padding: 0 7px; border: 2px solid #888c94; border-radius: 0 5px 5px 0; border-left: 1px solid #aaa; background: linear-gradient(#fff, #e2e8f2 45%, #aab2c0); }
.box { height: 28px; border: 1px solid #8c929c; background: #dde7f4; display: flex; align-items: stretch; flex: none; overflow: hidden; }
.box > .ico { align-self: center; }
.split { width: 52px; }
.pick { flex: 1; display: flex; align-items: center; justify-content: center; }
.pick .chan { margin-left: 0; }
.split .drop { width: 20px; border-left: 1px solid #8c929c; }
.range { width: 137px; border: 2px solid #111; background: linear-gradient(#ffffe6, #bcbca0); }
.range select, .name select { appearance: none; flex: 1; padding-left: 4px; min-width: 0; outline: 0; line-height: 24px; }
.range .drop { border-left: 1px solid #444; width: 20px; }
.range .drop::before { margin: 0; }
.name { width: 172px; }
.name .drop { border-left: 1px solid #8c929c; width: 21px; }
.spin input { flex: 1; min-width: 0; width: 0; outline: 0; line-height: 24px; }
.spin label { line-height: 25px; color: #000; }
.gain { width: 108px; }
.shift { width: 119px; }
.level { width: 158px; }
.spin .ico { margin-left: 3px; }
.steps { width: 18px; display: flex; flex-direction: column; border-left: 1px solid #8c929c; }
.steps button { flex: 1; display: flex; align-items: center; justify-content: center; }
.steps button + button { border-top: 1px solid #8c929c; }
.steps button::before { content: ""; border: 6px solid transparent; border-bottom-color: #8c8c8c; border-top: 0; }
.steps button + button::before { border-top: 6px solid #8c8c8c; border-bottom: 0; }
.extra { width: 20px; border-left: 1px solid #8c929c; display: flex; align-items: center; justify-content: center; }
.zeroico { width: 15px; height: 20px; }
.one { width: 32px; align-items: center; justify-content: center; }
.wheel { width: 22px; height: 22px; border-radius: 50%; background: radial-gradient(#fff, transparent 55%), conic-gradient(#f0d820, #ff6020 70deg, #c02060 120deg, #3828a0 190deg, #2090d8 250deg, #20b838 310deg, #f0d820); }

.list { position: absolute; left: 65px; top: 272px; width: 125px; list-style: none; padding: 2px 1px 0; background: #dde7f4; border: 1px solid #777; border-right: 2px solid #222; border-bottom: 2px solid #111; box-shadow: 3px 3px 3px rgba(0, 0, 0, .4); }
.list li { height: 29px; padding-left: 3px; line-height: 27px; white-space: nowrap; border: 1px solid transparent; }
.list .hot { background: #ffffdc; border-color: #aaa890; }
.rings { position: absolute; inset: 0; width: 100%; height: 100%; pointer-events: none; }
.rings ellipse { fill: none; stroke: #ee1c25; stroke-width: 6; }
```
FILE: plot.js
```js
const NS = "http://www.w3.org/2000/svg";
const grid = document.getElementById("grid");
function dots(d) {
  const p = document.createElementNS(NS, "path");
  p.setAttribute("d", d);
  p.setAttribute("stroke", "#a0a0a0");
  p.setAttribute("stroke-dasharray", "1 5.29");
  grid.appendChild(p);
}
const step = 31.45;
for (let k = 0; k < 32; k++) dots("M" + (Math.round(30 + k * step) + 0.5) + " 5V537");
for (let k = 0; k < 17; k++) dots("M30 " + (Math.round(31 + k * 31.42) + 0.5) + "H1028");

// Noise trace with slow drift and occasional spikes
let seed = 77;
const rnd = () => (seed = (seed * 16807) % 2147483647) / 2147483647;
let d = "", y = 0;
for (let x = 30; x < 1031; x += 1.5) {
  y = y * 0.3 + (rnd() - 0.5) * 13;
  const spike = rnd() > 0.96 ? (rnd() - 0.5) * 15 : 0;
  d += (d ? "L" : "M") + x + " " + (273.5 + Math.sin(x / 50) * 1.5 + y + spike).toFixed(1);
}
document.getElementById("wave").setAttribute("d", d);
```
